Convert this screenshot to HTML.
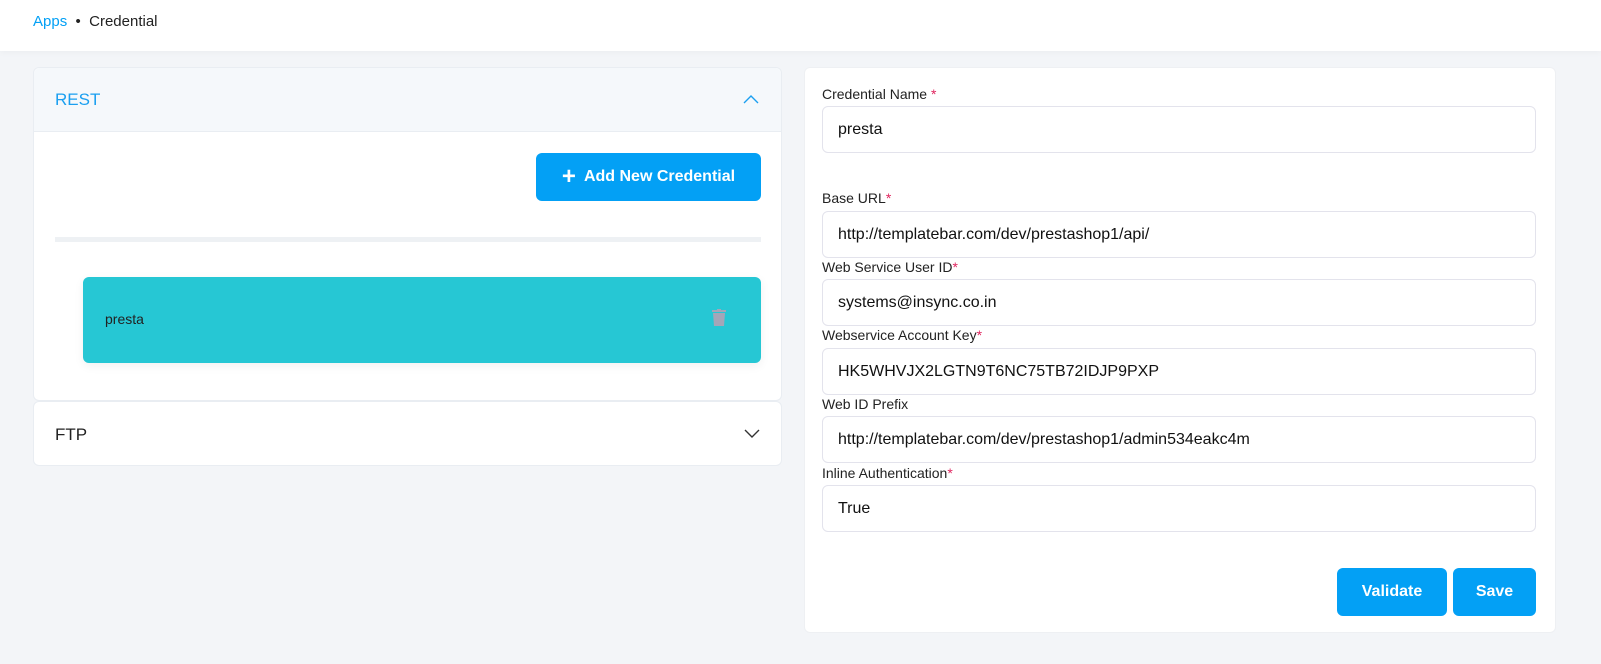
<!DOCTYPE html>
<html><head><meta charset="utf-8"><style>
*{box-sizing:border-box;margin:0;padding:0}
body{width:1601px;height:664px;background:#f3f5f8;font-family:"Liberation Sans",sans-serif;position:relative;overflow:hidden;color:#222}
.hdr{position:absolute;left:0;top:0;width:1601px;height:51px;background:#fff;box-shadow:0 2px 6px rgba(0,0,0,.03)}
.bc{position:absolute;left:33px;top:13px;font-size:15px;color:#222}
.bc .a{color:#03a0f5}
.card{position:absolute;background:#fff;border:1px solid #e9edf2;border-radius:6px}
.restH{position:absolute;left:0;top:0;right:0;height:64px;background:#f5f8fb;border-bottom:1px solid #e9edf2;border-radius:6px 6px 0 0}
.restH span{position:absolute;left:21px;top:22px;font-size:17px;color:#1a9ff0}
.btn{position:absolute;background:#03a0f5;color:#fff;border-radius:6px;font-weight:bold;font-size:16px;display:flex;align-items:center;justify-content:center}
.lbl{position:absolute;left:822px;font-size:14px;color:#222}
.lbl i{color:#e0245e;font-style:normal}
.inp{position:absolute;left:822px;width:714px;height:47px;border:1px solid #e3e3ec;border-radius:6px;background:#fff;font-size:16px;padding-left:15px;line-height:45px;color:#111}
</style></head><body>
<div class="hdr"><div class="bc"><span class="a">Apps</span> &nbsp;•&nbsp; Credential</div></div>

<div class="card" style="left:33px;top:67px;width:749px;height:334px">
  <div class="restH"><span>REST</span>
    <svg style="position:absolute;right:22px;top:26px" width="16" height="10" viewBox="0 0 16 10"><path d="M1 9 L8 2 L15 9" fill="none" stroke="#1a9ff0" stroke-width="1.4"/></svg>
  </div>
  <div class="btn" style="left:502px;top:85px;width:225px;height:48px"><span style="font-size:24px;margin-right:8px;font-weight:bold">+</span>Add New Credential</div>
  <div style="position:absolute;left:21px;top:169px;width:706px;height:5px;background:#eef1f4"></div>
  <div style="position:absolute;left:49px;top:209px;width:678px;height:86px;background:#26c7d4;border-radius:6px;box-shadow:0 3px 10px rgba(0,0,0,.06)">
    <span style="position:absolute;left:22px;top:34px;font-size:14px;color:#222">presta</span>
    <svg style="position:absolute;left:628px;top:32px" width="16" height="18" viewBox="0 0 16 18"><rect x="1" y="1" width="14" height="2" fill="#a4a6b8"/><rect x="6" y="0" width="4" height="2" fill="#a4a6b8"/><path d="M2 4 H14 L13 17 H3 Z" fill="#a4a6b8"/></svg>
  </div>
</div>
<div class="card" style="left:33px;top:401px;width:749px;height:65px">
  <span style="position:absolute;left:21px;top:23px;font-size:17px;color:#222">FTP</span>
  <svg style="position:absolute;right:21px;top:27px" width="16" height="10" viewBox="0 0 16 10"><path d="M1 1 L8 8 L15 1" fill="none" stroke="#333" stroke-width="1.4"/></svg>
</div>

<div class="card" style="left:804px;top:67px;width:752px;height:566px;border-color:#eef0f3"></div>
<div class="lbl" style="top:86px">Credential Name <i>*</i></div>
<div class="inp" style="top:106px">presta</div>
<div class="lbl" style="top:190px">Base URL<i>*</i></div>
<div class="inp" style="top:211px">http://templatebar.com/dev/prestashop1/api/</div>
<div class="lbl" style="top:259px">Web Service User ID<i>*</i></div>
<div class="inp" style="top:279px">systems@insync.co.in</div>
<div class="lbl" style="top:327px">Webservice Account Key<i>*</i></div>
<div class="inp" style="top:348px">HK5WHVJX2LGTN9T6NC75TB72IDJP9PXP</div>
<div class="lbl" style="top:396px">Web ID Prefix</div>
<div class="inp" style="top:416px">http://templatebar.com/dev/prestashop1/admin534eakc4m</div>
<div class="lbl" style="top:465px">Inline Authentication<i>*</i></div>
<div class="inp" style="top:485px">True</div>
<div class="btn" style="left:1337px;top:568px;width:110px;height:48px">Validate</div>
<div class="btn" style="left:1453px;top:568px;width:83px;height:48px">Save</div>
</body></html>
